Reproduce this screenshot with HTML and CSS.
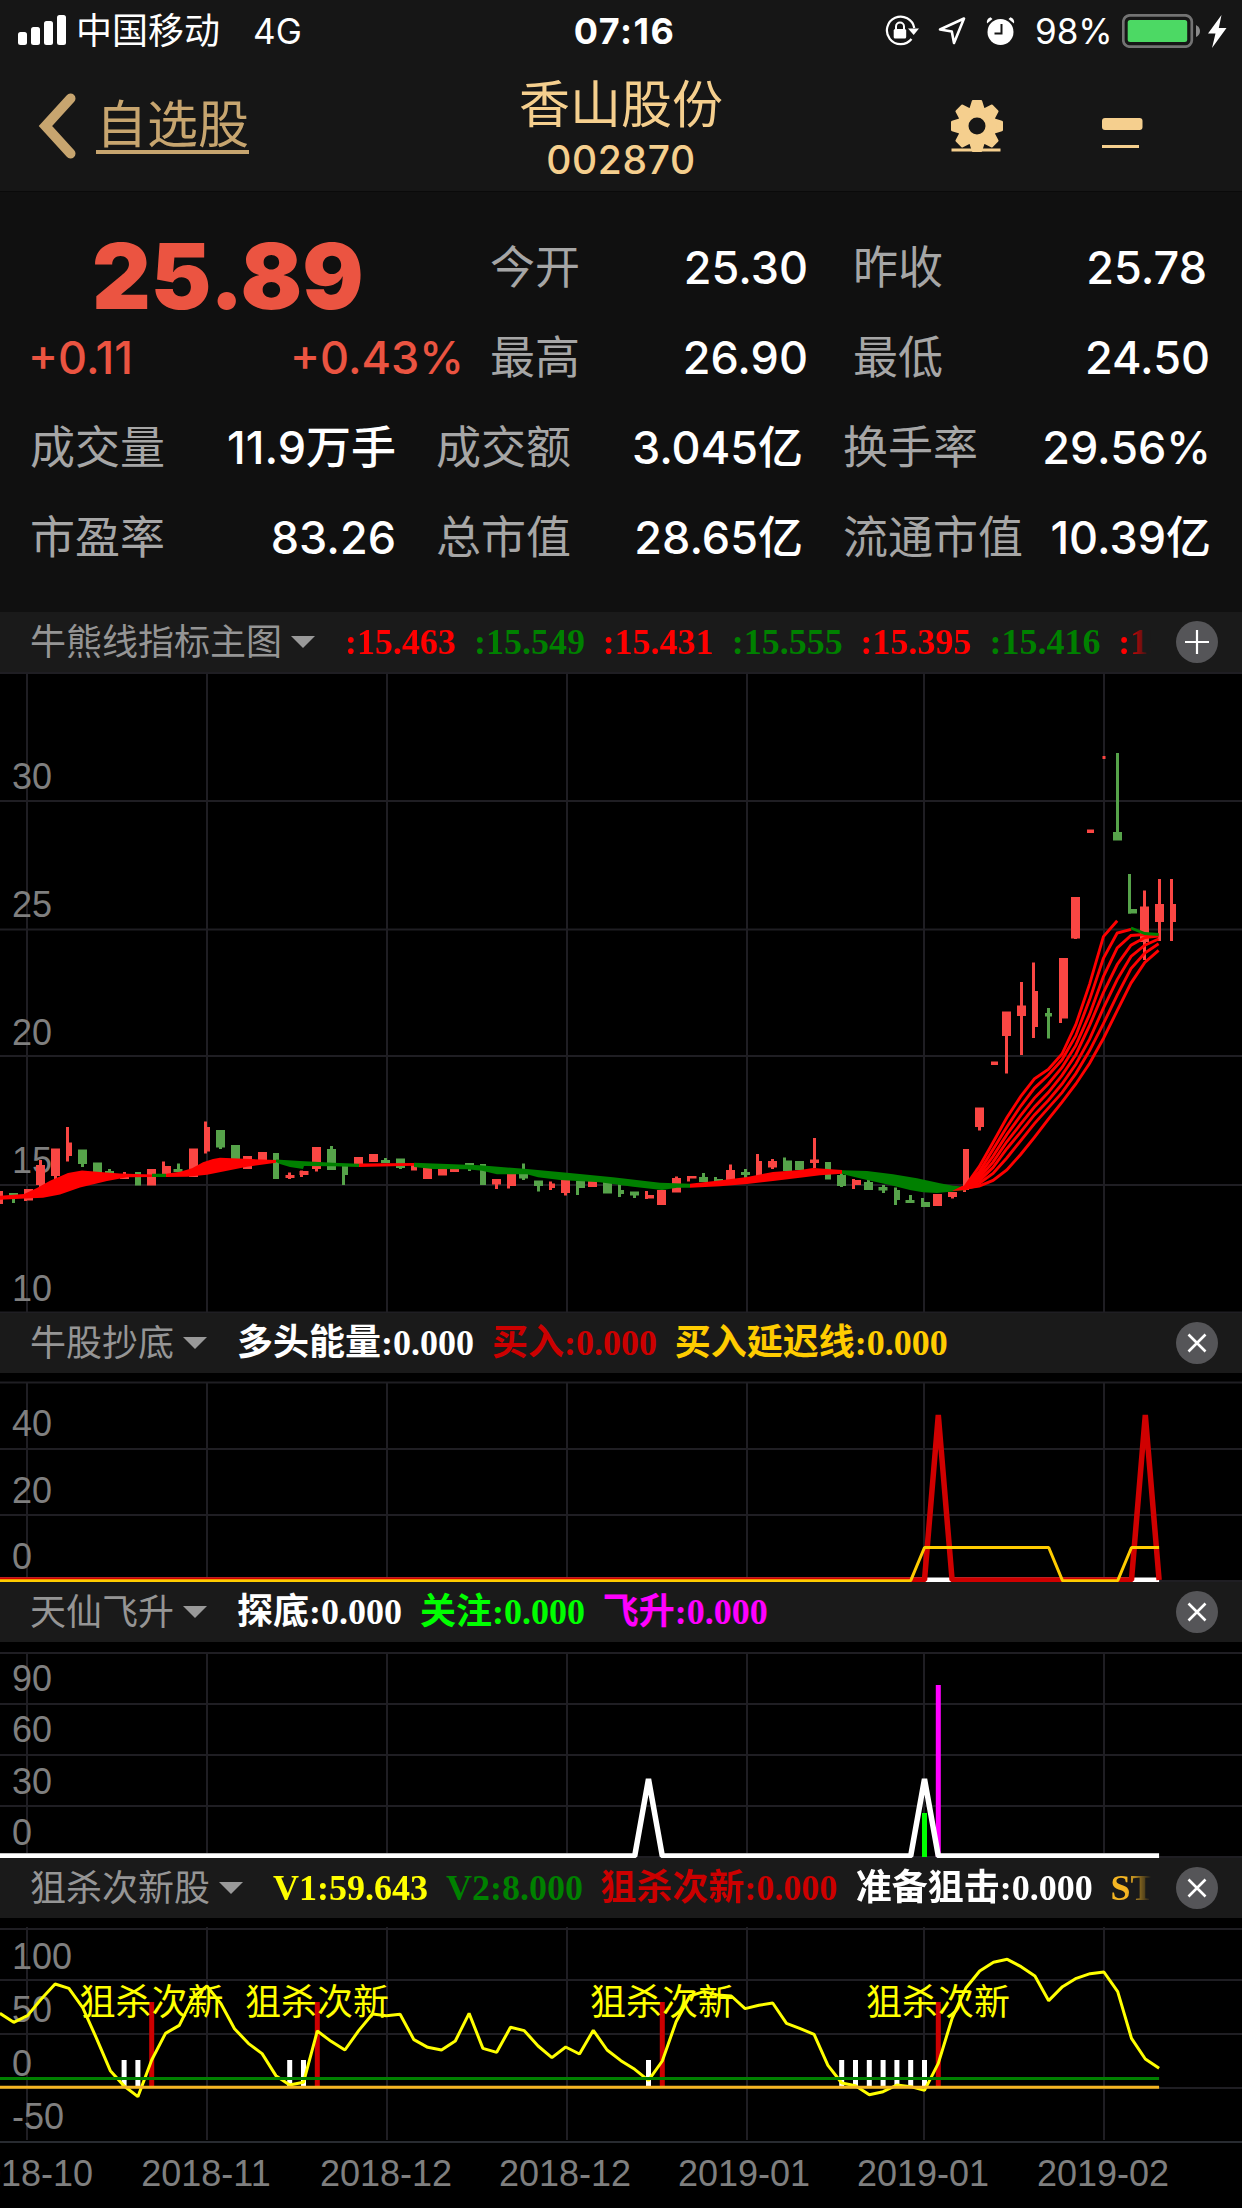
FILE: index.html
```html
<!DOCTYPE html>
<html lang="zh-CN">
<head>
<meta charset="utf-8">
<title>香山股份 002870</title>
<link rel="stylesheet" href="styles.css">
</head>
<body>
<div class="app">
  <header class="top">
    <div class="status">
      <div class="status-left">
        <svg class="signal" width="48" height="32" viewBox="0 0 48 32"><g fill="#fff"><rect x="0" y="17" width="9" height="13" rx="2.5"/><rect x="13" y="12" width="9" height="18" rx="2.5"/><rect x="26" y="6" width="9" height="24" rx="2.5"/><rect x="39" y="0" width="9" height="30" rx="2.5"/></g></svg>
        <span class="carrier">中国移动</span><span class="net">4G</span>
      </div>
      <div class="clock">07:16</div>
      <div class="status-right">
        <svg width="34" height="32" viewBox="0 0 34 32"><path d="M29.3 13A13.8 13.8 0 1 0 26.5 24" fill="none" stroke="#fff" stroke-width="2.2"/><path d="M23 13.5h11L28.7 20z" fill="#fff"/><rect x="8.700" y="14" width="12.500" height="9.500" rx="1.500" fill="#fff"/><path d="M11 15v-3.500a4 4 0 0 1 8 0V15" fill="none" stroke="#fff" stroke-width="2"/></svg>
        <svg class="loc" width="28" height="30" viewBox="0 0 28 30"><path d="M2 13.500 26 2.500 16 27 13.800 15.500z" fill="none" stroke="#fff" stroke-width="2.600" stroke-linejoin="round"/></svg>
        <svg class="alarm" width="29" height="30" viewBox="0 0 29 30"><circle cx="14.500" cy="16" r="13" fill="#fff"/><path d="M1 7.500Q0 3 4.500 1.300L6.500 3zM28 7.500Q29 3 24.500 1.300L22.500 3z" fill="#fff"/><path d="M15.500 8v9.500h-7" fill="none" stroke="#161616" stroke-width="2"/></svg>
        <span class="percent">98%</span>
        <svg class="battery" width="78" height="34" viewBox="0 0 78 34"><rect x="1.300" y="1.300" width="68.500" height="31.400" rx="6.500" fill="none" stroke="#737373" stroke-width="2.700"/><rect x="5.700" y="6" width="59.500" height="22" rx="2.500" fill="#4cd964"/><path d="M74 11q4 2 4 6t-4 6z" fill="#8a8a8a"/></svg>
        <svg class="bolt" width="19" height="33" viewBox="0 0 19 33"><path d="M13.500 0 0 18.500h7.500L4 33 18.500 13h-7.700z" fill="#fff"/></svg>
      </div>
    </div>
    <nav class="nav">
      <a class="back">
        <svg width="40" height="68" viewBox="0 0 40 68"><path d="M34.500 5.500 9.500 33l25 27.500" fill="none" stroke="#c7a56f" stroke-width="10" stroke-linecap="round"/></svg>
        <span class="back-text">自选股</span>
      </a>
      <div class="title"><h1>香山股份</h1><p>002870</p></div>
      <div class="actions">
        <svg width="54" height="56" viewBox="-27 -27 54 56">
          <defs><path id="tooth" d="M-8-16-5.200-25Q-5-26-4-26H4Q5-26 5.200-25L8-16z"/></defs>
          <g fill="#f5cf8e"><use href="#tooth"/><use href="#tooth" transform="rotate(45)"/><use href="#tooth" transform="rotate(90)"/><use href="#tooth" transform="rotate(135)"/><use href="#tooth" transform="rotate(180)"/><use href="#tooth" transform="rotate(225)"/><use href="#tooth" transform="rotate(270)"/><use href="#tooth" transform="rotate(315)"/><rect x="-25.500" y="22.500" width="49" height="3"/></g>
          <circle r="14" fill="none" stroke="#f5cf8e" stroke-width="11"/>
        </svg>
        <svg class="minus" width="41" height="32" viewBox="0 0 41 32"><g fill="#f5cf8e"><rect width="40.500" height="12" rx="3"/><rect y="27" width="37" height="3"/></g></svg>
      </div>
    </nav>
  </header>

  <section class="quote">
    <div class="quote-main">
      <div class="price-box">
        <div class="price">25.89</div>
        <div class="change"><span class="diff">+0.11</span><span class="pct">+0.43%</span></div>
      </div>
      <dl class="pairs">
        <div class="pair"><dt>今开</dt><dd>25.30</dd></div>
        <div class="pair"><dt>昨收</dt><dd>25.78</dd></div>
        <div class="pair"><dt>最高</dt><dd>26.90</dd></div>
        <div class="pair"><dt>最低</dt><dd class="wide">24.50</dd></div>
      </dl>
    </div>
    <dl class="stats">
      <div class="pair"><dt>成交量</dt><dd>11.9万手</dd></div>
      <div class="pair"><dt>成交额</dt><dd>3.045亿</dd></div>
      <div class="pair"><dt>换手率</dt><dd>29.56%</dd></div>
      <div class="pair"><dt>市盈率</dt><dd>83.26</dd></div>
      <div class="pair"><dt>总市值</dt><dd>28.65亿</dd></div>
      <div class="pair"><dt>流通市值</dt><dd>10.39亿</dd></div>
    </dl>
  </section>

  <div class="bar">
    <span class="name">牛熊线指标主图</span><i class="caret"></i>
    <div class="values fade"><b class="red">:15.463</b><b class="green">:15.549</b><b class="red">:15.431</b><b class="green">:15.555</b><b class="red">:15.395</b><b class="green">:15.416</b><b class="red">:15.402</b></div>
    <svg class="btn" width="42" height="42" viewBox="-21 -21 42 42"><circle r="21" fill="#555558"/><path d="M-12 0H12M0-12V12" stroke="#fff" stroke-width="2.200"/></svg>
  </div>
  <svg class="chart" width="1242" height="641" viewBox="0 672 1242 641">
    <path class="grid" d="M0 673H1242M0 801H1242M0 929.500H1242M0 1056H1242M0 1185H1242M0 1312.500H1242M27 672V1313M207 672V1313M387 672V1313M567 672V1313M747 672V1313M924 672V1313M1104 672V1313"/>
    <g class="axis"><text x="12" y="788.500">30</text><text x="12" y="916.500">25</text><text x="12" y="1044.500">20</text><text x="12" y="1172.500">15</text><text x="12" y="1300.500">10</text></g>
    <!-- rising candles: 9px bodies, clipped 6px bodies, wicks -->
    <g class="up">
      <path class="b9" d="M-1.500 1191V1204M28.500 1189V1200.500M40.500 1165V1185M55.500 1148.500V1176M124.500 1174V1179M151.500 1169V1185.500M166.500 1166V1176M193.500 1148.500V1177M247.500 1156V1169M262.500 1152V1160M290 1175V1178M304 1171V1175M316.500 1147V1169M358.500 1157V1165M373.500 1154V1162M427.500 1167V1179M442.500 1167V1175.500M454.500 1167V1172M496.500 1179V1184.500M511.500 1173V1186M565.500 1178V1193M592.500 1181V1187M649.500 1195V1198.500M661.500 1190V1205M676.500 1178V1192.500M692 1176V1178.500M730.500 1170V1180M772.500 1161V1167.500M814.500 1159.500V1163M856.500 1180V1185M937.500 1194V1206M952.500 1192V1197M979.500 1107.500V1127M1006.500 1011.500V1036M1021.500 1005.500V1016M1063.500 958V1018.500M1075.500 897V938.500M1144.500 906.500V942M1159.500 904V922"/>
      <path class="b7" d="M994.500 1061.500V1065M1090.500 829.500V833"/>
      <path class="b6" d="M69 1142.500V1156M207 1127V1151.500M414 1163V1170.500M552 1183.500V1188M759 1161V1176M966 1149V1190M1035 991V1027M1173 904V922"/>
      <path class="wick" d="M25.500 1195V1201M40.500 1160V1187M55.500 1170V1179M67.500 1127V1161.500M124.500 1172V1176M163.500 1161.500V1176M205.500 1121.500V1153.500M289.500 1172.500V1179M301.500 1170.500V1177M316.500 1165V1171.500M496.500 1180V1189M508.500 1180V1188.500M550.500 1181.500V1190M565.500 1190V1195.500M646.500 1191V1199M676.500 1176.500V1190M688.500 1176V1181.500M730.500 1164.500V1175M757.500 1154V1176M772.500 1159V1169M814.500 1138V1168M853.500 1179V1189M952.500 1195V1198.500M964.500 1149V1192M979.500 1120V1130.500M1006.500 1030V1073.500M1021.500 982V1055M1033.500 962.500V1038M1060.500 1010V1023M1075.500 930V939M1144.500 890.500V960M1159.500 879V941M1171.500 879V941M1104 756V759"/>
    </g>
    <g class="down">
      <path class="b9" d="M13.500 1193V1196M82.500 1149.500V1164M97.500 1162.500V1173M109.500 1171V1176M178 1169V1172M220.500 1130V1147.500M235.500 1145V1159M331.500 1149V1170M385.500 1160V1163M400.500 1158.500V1168M469.500 1163V1168.500M523.500 1173V1178.500M538.500 1180.500V1186M580.500 1181V1188M607.500 1180V1193.500M634.500 1191.500V1195.500M703.500 1177V1182M718.500 1179V1182M745.500 1172V1175M787.500 1160.500V1171M799.500 1161V1170M841.500 1175V1186M868.500 1182V1190M883 1187V1190.500M910 1200V1203M925.500 1202V1207M1117.500 832V840.500M1132.500 909V913.500"/>
      <path class="b7" d="M1048.500 1013V1016.500"/>
      <path class="b6" d="M138 1172V1185.500M276 1153V1179M345 1166V1175M483 1164V1185M621 1190V1194M828 1162V1179.500M897 1190V1200"/>
      <path class="wick" d="M13.500 1195V1203M82.500 1160V1167M109.500 1169V1174M178.500 1163.500V1170M220.500 1145V1149M331.500 1146V1160M343.500 1170V1185M385.500 1158V1162M400.500 1165V1169M469.500 1165V1171M523.500 1163.500V1180M538.500 1182V1191.500M577.500 1182V1195M619.500 1183V1197M634.500 1193V1198M703.500 1173V1180M715.500 1177V1181M745.500 1169V1178M784.500 1157.500V1170M841.500 1173V1187M868.500 1180V1188M883.500 1185V1193M895.500 1187.500V1205M910.500 1195V1202M922.500 1198V1206M1117.500 753V835M1129.500 874V913.500M1048.500 1008V1038.500"/>
    </g>
    <!-- bull / bear bands -->
    <g fill="#f00">
      <path d="M0 1195.700 24 1194 37 1188 50 1180.700 68 1173 82 1170.500 100 1172 120 1173.500 152 1174.500V1177L127 1177.300 107 1181 80 1187.500 60 1194.500 43 1197.800 20 1198.700 0 1199.700z"/>
      <path d="M166 1173.700 180 1171.700 192 1168.300 203 1162.300 213 1159 220 1157.700 250 1159 276 1160V1162.700L247 1166.700 227 1170.700 207 1174.700 187 1176.700 166 1177z"/>
      <path d="M359 1163.500 414 1163V1165.700L359 1167z"/>
      <path d="M690 1183.700 717 1180.700 747 1177 773 1172 800 1170 813 1168 842 1170V1173.700L820 1175.300 800 1177.700 773 1181 747 1184 720 1186.300 690 1187.700z"/>
    </g>
    <g fill="#008000">
      <path d="M152 1173.700H166V1177H152zM276 1159.500 300 1161 333 1162.700 359 1163.700V1167L333 1166.300 304 1166 303 1169 290 1167 280 1164 276 1162z"/>
      <path d="M414 1162.700 480 1165.300 527 1169 567 1172.700 613 1177.300 660 1182.700 690 1183.700V1187.700L677 1187.700 662 1190 633 1186.700 600 1182.300 560 1180 538 1177.300 527 1174.300 497 1174.300 482 1170.700 467 1169.300 433 1169 414 1167z"/>
      <path d="M842 1170.300 867 1171 893 1174.300 917 1178.300 940 1183.300 953 1185.700 966 1186.700V1190L950 1191.700 937 1193 923 1192.300 910 1190 890 1185 867 1180 842 1174z"/>
    </g>
    <path d="M952 1191 962 1186 974 1184 980 1186.500 966 1190z" fill="#f00"/>
    <!-- averages: one x unit per trading day -->
    <g class="ma" transform="translate(27 0) scale(13.8 1)">
      <path d="M68 1186.200 69 1166.600 70 1142.500 71 1117.700 72 1096.700 73 1078.800 74 1069.500 75 1054 76 1024.700 77 984.100 78 936.600 79 920.700"/>
      <path d="M68 1186.600 69 1171.800 70 1149.400 71 1127 72 1106.300 73 1088.100 74 1075.300 75 1059.800 76 1035.700 77 999.600 78 958.300 79 933.100 80 929.300"/>
      <path d="M68 1187 69 1175.200 70 1156.300 71 1134.600 72 1115.600 73 1098.100 74 1084 75 1067.400 76 1045.400 77 1014.400 78 976.500 79 947.900 80 935.500 81 934.500 82 935.500"/>
      <path d="M68 1187.300 69 1178 70 1162.100 71 1141.800 72 1124.200 73 1107 74 1092.600 75 1075.300 76 1054.700 77 1025.400 78 992.700 79 964.500 80 945.200 81 937.600 82 936"/>
      <path d="M68 1187.300 69 1180.700 70 1167.600 71 1148.700 72 1132.200 73 1114.900 74 1100.500 75 1084 76 1064.300 77 1039.200 78 1008.200 79 979.600 80 956.500 81 945.200 82 939"/>
      <path d="M68 1187.300 69 1183.500 70 1173.500 71 1158 72 1140.800 73 1123.600 74 1108.100 75 1092.600 76 1073.600 77 1050.600 78 1023.700 79 995.100 80 968.600 81 953.100 82 943.800"/>
      <path d="M68 1188 69 1186.200 70 1180.400 71 1170 72 1154.500 73 1137.300 74 1119.400 75 1102.200 76 1084 77 1063.300 78 1038.500 79 1010.600 80 983.100 81 962.400 82 950.300"/>
      <path class="bear" d="M80 928 81 933.500 82 934.500"/>
    </g>
  </svg>

  <div class="bar">
    <span class="name">牛股抄底</span><i class="caret"></i>
    <div class="values"><b class="white">多头能量:0.000</b><b class="crimson">买入:0.000</b><b class="gold">买入延迟线:0.000</b></div>
    <svg class="btn" width="42" height="42" viewBox="-21 -21 42 42"><circle r="21" fill="#555558"/><path d="M-8.500-8.500 8.500 8.500M8.500-8.500-8.500 8.500" stroke="#fff" stroke-width="2.600"/></svg>
  </div>
  <svg class="chart" width="1242" height="209" viewBox="0 1373 1242 209">
    <path class="grid" d="M0 1382.500H1242M0 1449H1242M0 1515H1242M0 1581H1242M27 1382V1577M207 1382V1577M387 1382V1577M567 1382V1577M747 1382V1577M924 1382V1577M1104 1382V1577"/>
    <g class="axis"><text x="12" y="1436">40</text><text x="12" y="1502.500">20</text><text x="12" y="1568.500">0</text></g>
    <g class="line" transform="translate(27.500 0) scale(13.8 1)">
      <path stroke="#fff" stroke-width="5" d="M-2 1580H82"/>
      <path stroke="#d00000" stroke-width="5.500" d="M-2 1580H65L66 1415 67 1580H80L81 1415 82 1580"/>
      <path stroke="#ffcc00" stroke-width="3" d="M-2 1580.700H64L65 1547.500H74L75 1580.700H79L80 1547.500H82"/>
    </g>
  </svg>

  <div class="bar">
    <span class="name">天仙飞升</span><i class="caret"></i>
    <div class="values"><b class="white">探底:0.000</b><b class="lime">关注:0.000</b><b class="magenta">飞升:0.000</b></div>
    <svg class="btn" width="42" height="42" viewBox="-21 -21 42 42"><circle r="21" fill="#555558"/><path d="M-8.500-8.500 8.500 8.500M8.500-8.500-8.500 8.500" stroke="#fff" stroke-width="2.600"/></svg>
  </div>
  <svg class="chart" width="1242" height="216" viewBox="0 1642 1242 216">
    <path class="grid" d="M0 1653H1242M0 1704H1242M0 1755H1242M0 1806H1242M0 1857H1242M27 1652V1853M207 1652V1853M387 1652V1853M567 1652V1853M747 1652V1853M924 1652V1853M1104 1652V1853"/>
    <g class="axis"><text x="12" y="1690.500">90</text><text x="12" y="1742">60</text><text x="12" y="1793.500">30</text><text x="12" y="1844.500">0</text></g>
    <g class="line" transform="translate(27.500 0) scale(13.8 1)">
      <path stroke="#0f0" stroke-width="5" d="M65 1813V1857"/>
      <path stroke="#f0f" stroke-width="5" d="M66 1685V1857"/>
      <path stroke="#fff" stroke-width="5.500" d="M-2 1856H44L45 1779 46 1856H64L65 1779 66 1856H82"/>
    </g>
  </svg>

  <div class="bar">
    <span class="name">狙杀次新股</span><i class="caret"></i>
    <div class="values fade"><b class="yellow">V1:59.643</b><b class="green">V2:8.000</b><b class="crimson">狙杀次新:0.000</b><b class="white">准备狙击:0.000</b><b class="amber">STICK</b></div>
    <svg class="btn" width="42" height="42" viewBox="-21 -21 42 42"><circle r="21" fill="#555558"/><path d="M-8.500-8.500 8.500 8.500M8.500-8.500-8.500 8.500" stroke="#fff" stroke-width="2.600"/></svg>
  </div>
  <svg class="chart" width="1242" height="290" viewBox="0 1918 1242 290">
    <path class="grid" d="M0 1929H1242M0 1980H1242M0 2034H1242M0 2088H1242M27 1927V2140M207 1927V2140M387 1927V2140M567 1927V2140M747 1927V2140M924 1927V2140M1104 1927V2140"/>
    <path d="M0 2142H1242" stroke="#282b30" stroke-width="2"/>
    <g class="axis"><text x="12" y="1968.500">100</text><text x="12" y="2022">50</text><text x="12" y="2075.500">0</text><text x="12" y="2128.500">-50</text></g>
    <g class="axis mid"><text x="27" y="2186">2018-10</text><text x="206" y="2186">2018-11</text><text x="386" y="2186">2018-12</text><text x="565" y="2186">2018-12</text><text x="744" y="2186">2019-01</text><text x="923" y="2186">2019-01</text><text x="1103" y="2186">2019-02</text></g>
    <g class="line" transform="translate(27.500 0) scale(13.8 1)">
      <path stroke="#fff" stroke-width="5" d="M7 2060V2086M8 2060V2086M19 2060V2086M20 2060V2086M45 2060V2086M59 2060V2086M60 2060V2086M61 2060V2086M62 2060V2086M63 2060V2086M64 2060V2086M65 2060V2086"/>
      <path stroke="#c00" stroke-width="5" d="M9 2002V2086M21 2002V2086M46 2002V2086M66 2002V2086"/>
    </g>
    <g class="line" transform="translate(27.500 1910) scale(13.8 .33333)">
      <path stroke="#ff0" stroke-width="3" d="M-2 310-1 337 0 317 1 267 2 222 3 235 4 293 5 385 6 482 7 528 8 560 9 450 10 370 11 346 12 262 13 228 14 280 15 356 16 400 17 431 18 497 19 525 20 517 21 363 22 394 23 420 24 362 25 312 26 317 27 313 28 389 29 412 30 420 31 393 32 310 33 415 34 427 35 352 36 362 37 408 38 443 39 411 40 432 41 361 42 420 43 452 44 478 45 511 46 453 47 335 48 258 49 245 50 255 51 258 52 296 53 286 54 279 55 340 56 356 57 373 58 466 59 519 60 527 61 554 62 545 63 525 64 530 65 541 66 460 67 325 68 234 69 183 70 157 71 148 72 170 73 198 74 272 75 230 76 205 77 191 78 186 79 245 80 385 81 447 82 475"/>
      <path stroke="#008000" stroke-width="3" d="M-3 505.500H82"/>
      <path stroke="#f5b623" stroke-width="3" d="M-3 531.500H82"/>
    </g>
    <g class="mark"><text x="151.500" y="2014.500">狙杀次新</text><text x="317" y="2014.500">狙杀次新</text><text x="662" y="2014.500">狙杀次新</text><text x="938" y="2014.500">狙杀次新</text></g>
  </svg>
</div>
</body>
</html>
```
FILE: styles.css
```css
* { box-sizing: border-box; margin: 0; padding: 0; }

body {
  width: 1242px;
  background: #000;
  color: #fff;
  font-family: Inter, "Noto Sans CJK SC", sans-serif;
}

.app { display: flex; flex-direction: column; width: 1242px; height: 2208px; overflow: hidden; }
svg { display: block; flex: none; }

/* status bar and navigation */
.top { height: 192px; background: #161616; border-bottom: 1px solid #0a0a0a; }
.status { display: grid; grid-template-columns: 1fr auto 1fr; align-items: center; height: 62px; padding: 0 15px 0 18px; font-size: 36px; line-height: 62px; }
.status-left { display: flex; align-items: center; }
.carrier { margin-left: 10px; }
.net { margin-left: 33px; font-size: 35px; }
.clock { font-size: 36px; font-weight: 700; letter-spacing: 1.5px; padding-left: 4px; }
.status-right { display: flex; align-items: center; justify-content: flex-end; }
.loc { margin-left: 19px; }
.alarm { margin-left: 20px; }
.percent { margin-left: 20px; width: 77px; font-size: 35px; }
.battery { margin-left: 10px; }
.bolt { margin-left: 8px; }

.nav { display: grid; grid-template-columns: 1fr auto 1fr; align-items: center; height: 129px; }
.back { display: flex; align-items: center; gap: 20px; padding-left: 36px; color: #c7a56f; font-size: 51px; line-height: 60px; }
.back-text { height: 55px; line-height: 52px; border-bottom: 4px solid #c7a56f; }
.title { text-align: center; color: #f5cf8e; }
.title h1 { font-size: 51px; line-height: 66px; font-weight: 400; }
.title p { font-size: 39px; line-height: 44px; font-weight: 500; letter-spacing: 0.6px; }
.actions { display: flex; justify-content: flex-end; align-items: center; gap: 98px; padding-right: 99px; }
.minus { margin-top: 14px; }

/* quote */
.quote { height: 420px; background: #101010; padding: 31px 31px 0 30px; font-size: 45px; }
.quote-main { display: flex; height: 180px; }
.price-box { width: 434px; margin-right: 26px; color: #eb5441; }
.price { height: 90px; padding-left: 62px; font-size: 91px; line-height: 106px; font-weight: 900; }
.change { display: flex; justify-content: space-between; height: 90px; margin-left: -2px; line-height: 90px; font-size: 45px; font-weight: 500; }
.pairs { display: grid; grid-template-columns: 318px 354px; column-gap: 45px; flex: 1; }
.pairs .wide { margin-right: -3px; }
.stats { display: grid; grid-template-columns: 366px 367px 368px; column-gap: 37px 40px; justify-content: space-between; }
.pair { display: flex; justify-content: space-between; height: 90px; line-height: 90px; white-space: nowrap; }
.pair dt { color: #a6a6a6; }
.pair dd { color: #fff; font-weight: 500; }

/* indicator headings */
.bar { display: flex; align-items: center; height: 60px; flex: none; background: #1a1a1a; padding: 0 24px 0 30px; font-size: 36px; line-height: 60px; white-space: nowrap; }
.name { color: #959595; font-weight: 400; }
.caret { width: 24px; height: 12px; margin: 0 30px 0 9px; background: #999; clip-path: polygon(0 0, 100% 0, 50% 100%); }
.values { display: flex; gap: 17.9px; width: 0; flex: 1; margin-right: 25px; overflow: hidden; font-family: "Liberation Serif", "Noto Sans CJK SC", serif; }
.fade { -webkit-mask-image: linear-gradient(to left, transparent 0, #000 24px); mask-image: linear-gradient(to left, transparent 0, #000 24px); }
.red { color: #f00; }
.green { color: #008000; }
.white { color: #fff; }
.crimson { color: #c00; }
.gold { color: #fc0; }
.lime { color: #0f0; }
.magenta { color: #f0f; }
.yellow { color: #ff0; }
.amber { color: #f5b623; }

/* charts */
.grid { fill: none; stroke: #1f1e23; stroke-width: 2; }
.axis { fill: #7f7f7f; font: 36px "Liberation Sans", Arial, sans-serif; }
.mid, .mark { text-anchor: middle; }
.mark { fill: #ff0; font: 400 36px "Noto Sans CJK SC", sans-serif; }
.up { stroke: #fa4643; }
.down { stroke: #56a34a; }
.b9 { stroke-width: 9; }
.b7 { stroke-width: 7; }
.b6 { stroke-width: 6; }
.wick { stroke-width: 3; }
.ma path { fill: none; stroke: #f00; stroke-width: 2.9; vector-effect: non-scaling-stroke; }
.ma .bear { stroke: #008000; }
.line path { fill: none; stroke-linejoin: bevel; vector-effect: non-scaling-stroke; }
```
